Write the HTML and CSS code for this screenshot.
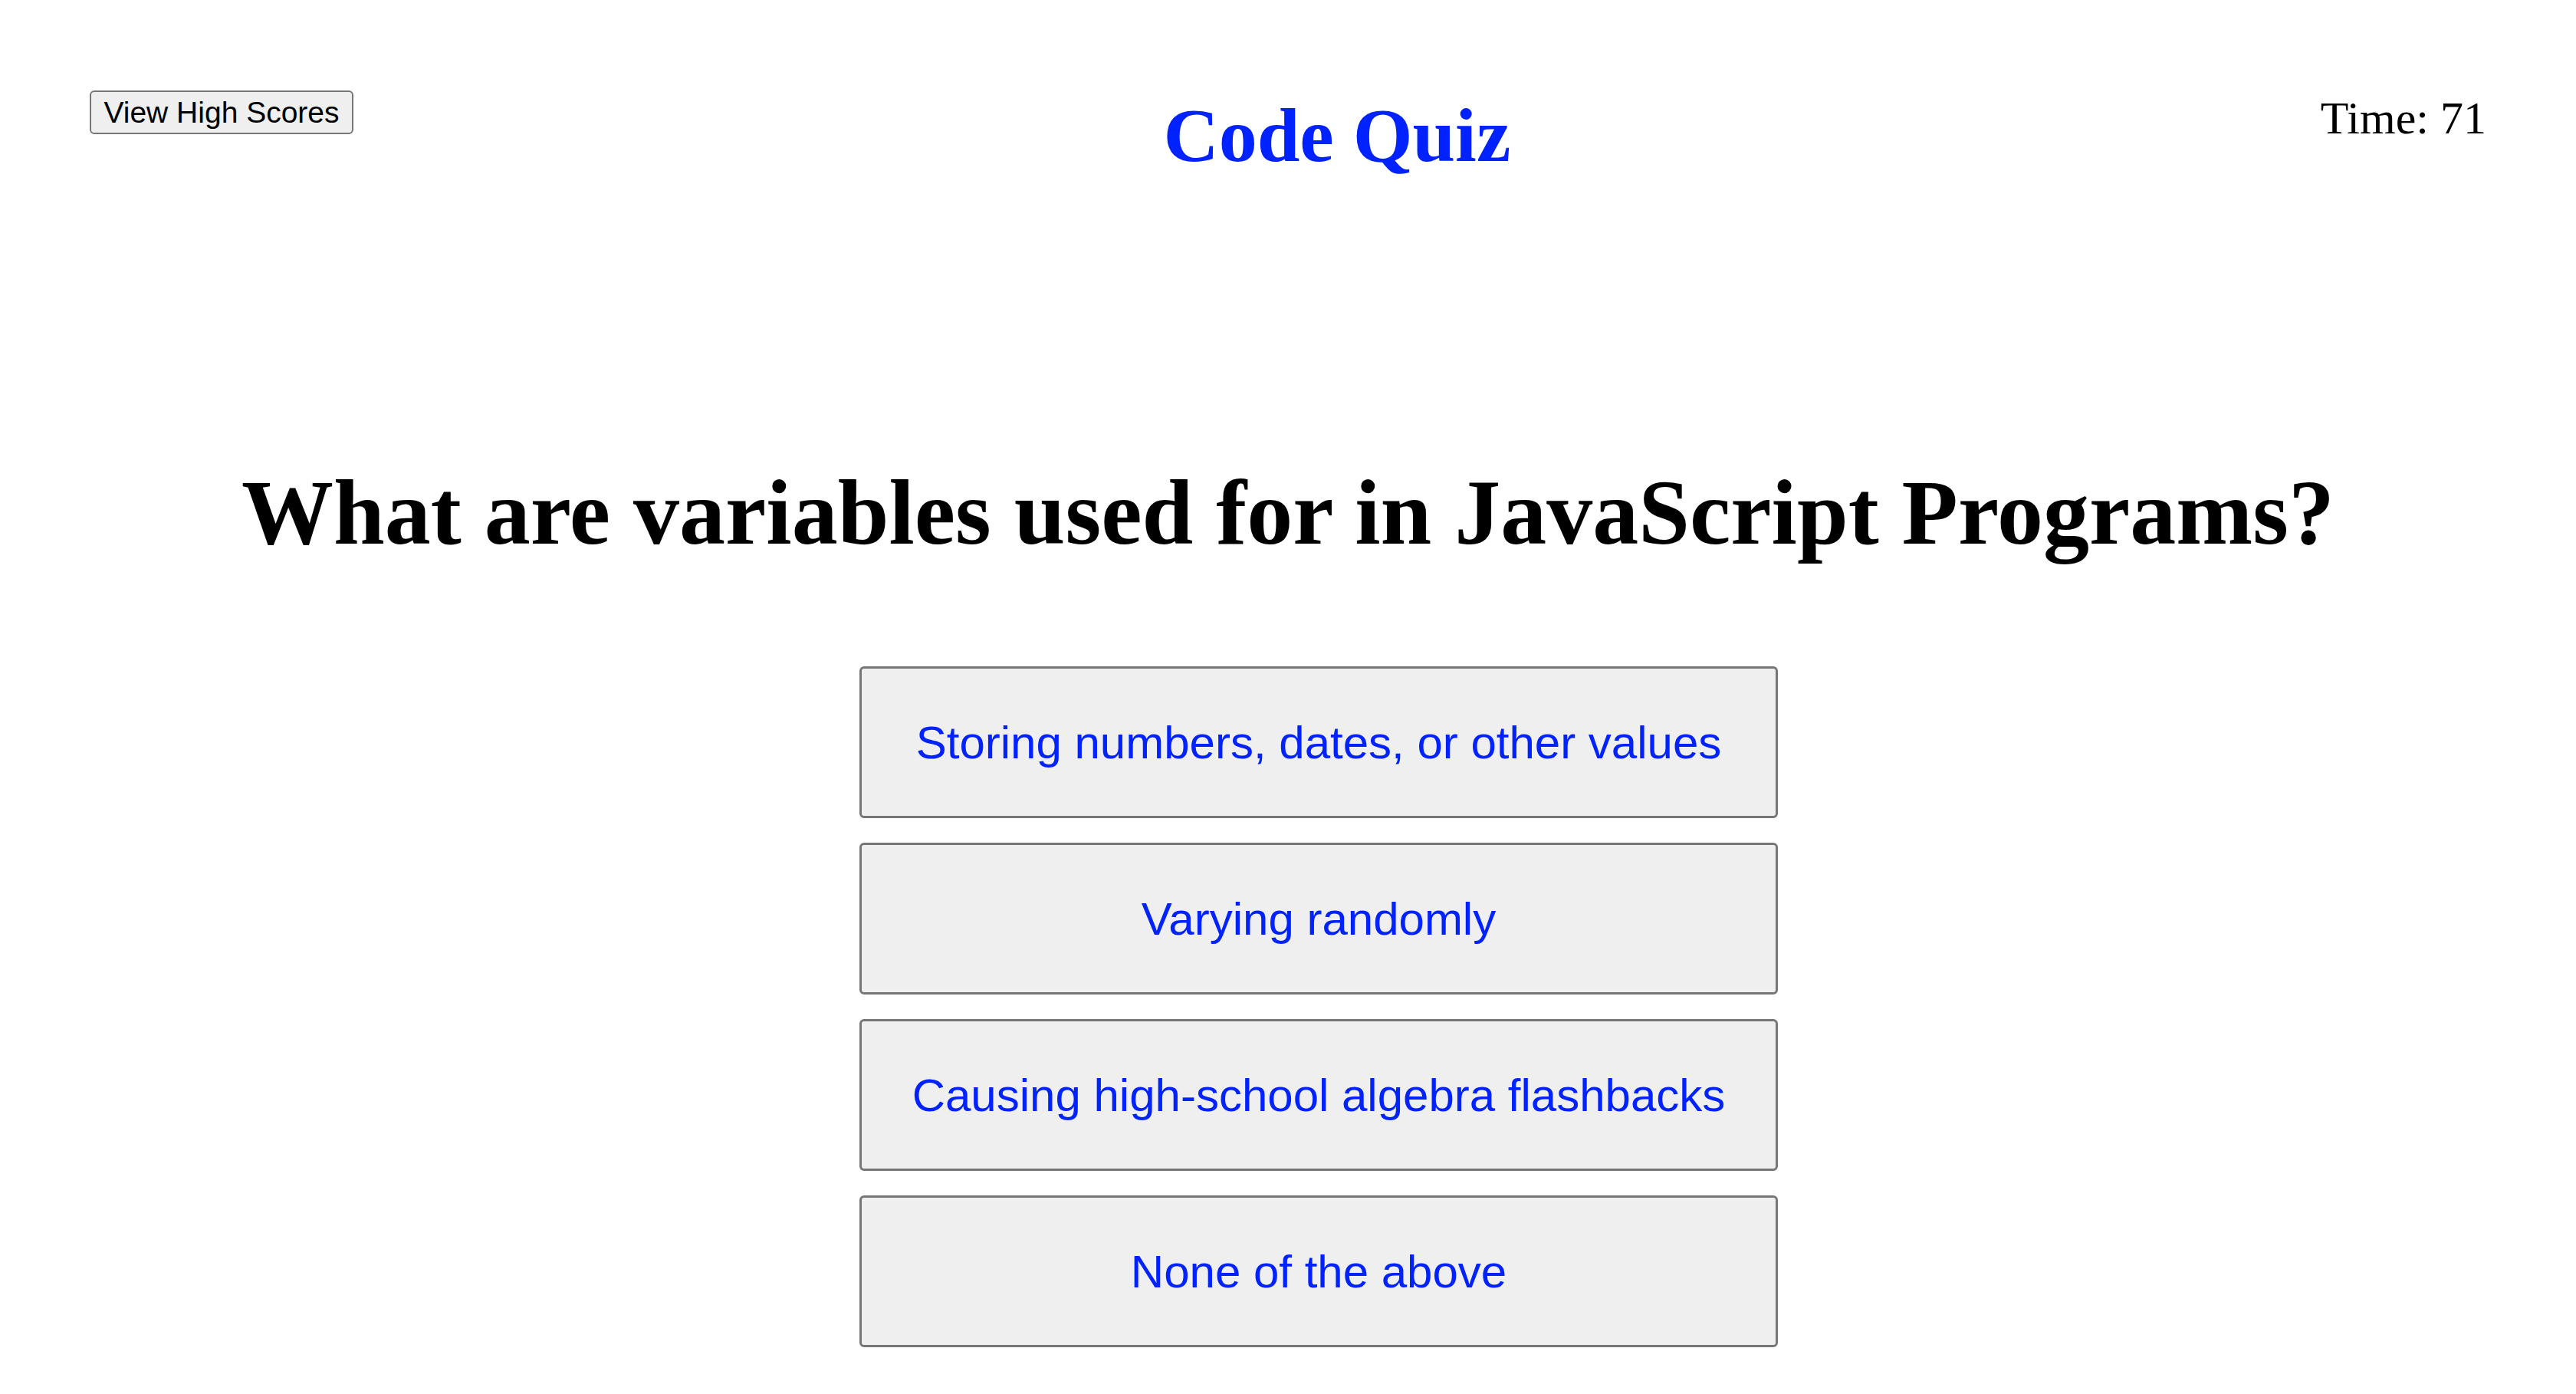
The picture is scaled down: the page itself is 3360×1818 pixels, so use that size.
FILE: index.html
```html
<!DOCTYPE html>
<html lang="en">
<head>
<meta charset="utf-8">
<title>Code Quiz</title>
<link rel="stylesheet" href="styles.css">
</head>
<body>
<header class="top-bar">
  <button class="scores-btn" type="button">View High Scores</button>
  <h1 class="title">Code Quiz</h1>
  <div class="timer">Time: 71</div>
</header>
<main class="quiz">
  <h2 class="question">What are variables used for in JavaScript Programs?</h2>
  <div class="answers">
    <button class="answer" type="button">Storing numbers, dates, or other values</button>
    <button class="answer" type="button">Varying randomly</button>
    <button class="answer" type="button">Causing high-school algebra flashbacks</button>
    <button class="answer" type="button">None of the above</button>
  </div>
</main>
</body>
</html>
```

FILE: styles.css
```css
html, body {
  margin: 0;
  padding: 0;
  background: #ffffff;
}

body {
  font-family: "Liberation Serif", "Times New Roman", serif;
  color: #000000;
}

.top-bar {
  display: flex;
  justify-content: space-between;
  align-items: flex-start;
  padding: 118px 117px 0 117px;
}

.scores-btn {
  box-sizing: border-box;
  width: 344px;
  height: 57px;
  margin: 0;
  padding: 0;
  font-family: "Liberation Sans", Arial, sans-serif;
  font-size: 39px;
  line-height: 1;
  color: #000000;
  background: #efefef;
  border: 2px solid #767676;
  border-radius: 6px;
}

.title {
  margin: 9px 0 0 0;
  font-size: 100px;
  line-height: 100px;
  font-weight: bold;
  color: #0022ff;
}

.timer {
  margin-top: 6px;
  font-size: 60px;
  line-height: 60px;
}

.quiz {
  display: flex;
  flex-direction: column;
  align-items: center;
  padding-top: 382px;
}

.question {
  margin: 0;
  font-size: 120px;
  line-height: 120px;
  font-weight: bold;
  text-align: center;
}

.answers {
  display: flex;
  flex-direction: column;
  align-items: center;
  gap: 32px;
  margin-top: 140px;
  padding-left: 80px;
}

.answer {
  box-sizing: border-box;
  width: 1198px;
  height: 198px;
  margin: 0;
  padding: 0;
  font-family: "Liberation Sans", Arial, sans-serif;
  font-size: 60px;
  color: #0022ff;
  background: #efefef;
  border: 3px solid #767676;
  border-radius: 6px;
}
```
